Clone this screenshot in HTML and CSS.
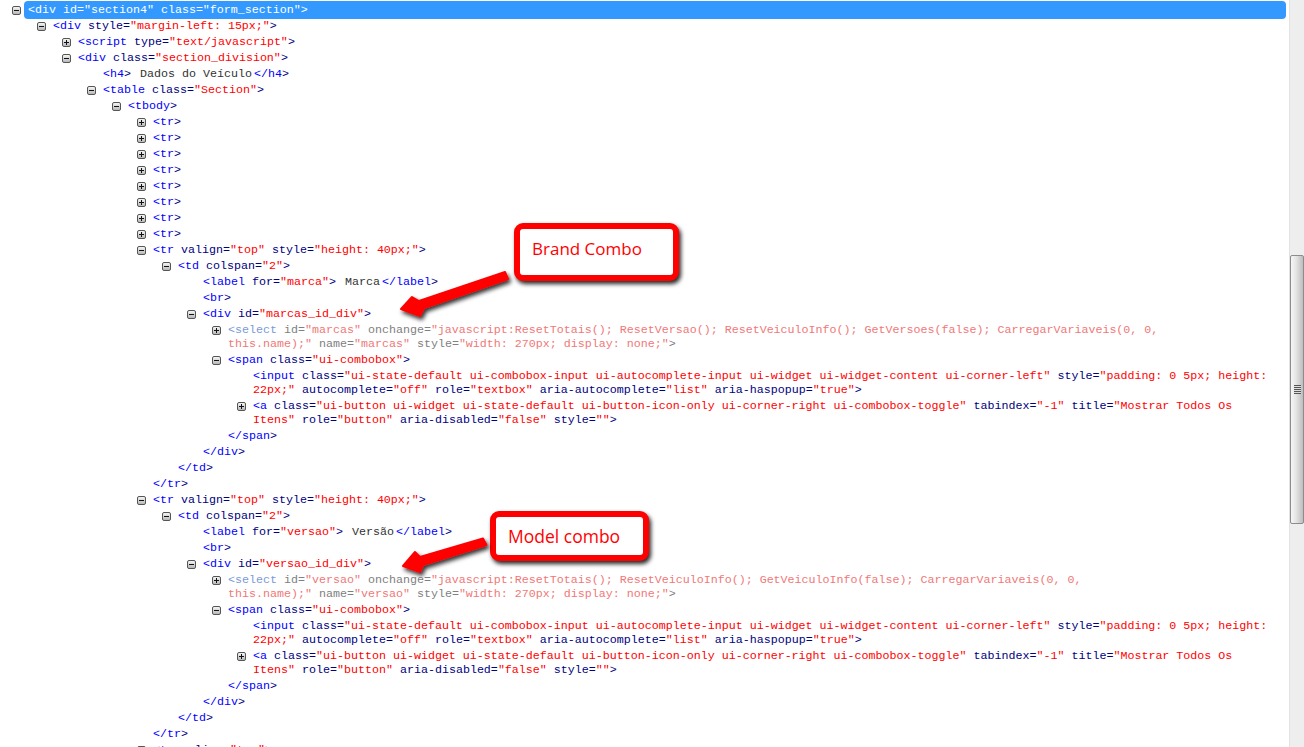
FILE: index.html
```html
<!DOCTYPE html>
<html lang="en">
<head>
<meta charset="utf-8">
<title>DOM tree</title>
<link rel="stylesheet" href="styles.css">
</head>
<body>
<div class="page">
<main class="tree">
<div class="row l0 sel"><i class="tog minus"></i><code>&lt;div id="section4" class="form_section"&gt;</code></div>
<div class="row l1"><i class="tog minus"></i><code><b>&lt;div</b> style=<u>"margin-left: 15px;"</u>&gt;</code></div>
<div class="row l2"><i class="tog plus"></i><code><b>&lt;script</b> type=<u>"text/javascript"</u>&gt;</code></div>
<div class="row l2"><i class="tog minus"></i><code><b>&lt;div</b> class=<u>"section_division"</u>&gt;</code></div>
<div class="row l3"><code><b>&lt;h4</b>&gt; <s>Dados do Veículo</s><b>&lt;/h4</b>&gt;</code></div>
<div class="row l3"><i class="tog minus"></i><code><b>&lt;table</b> class=<u>"Section"</u>&gt;</code></div>
<div class="row l4"><i class="tog minus"></i><code><b>&lt;tbody</b>&gt;</code></div>
<div class="row l5"><i class="tog plus"></i><code><b>&lt;tr</b>&gt;</code></div>
<div class="row l5"><i class="tog plus"></i><code><b>&lt;tr</b>&gt;</code></div>
<div class="row l5"><i class="tog plus"></i><code><b>&lt;tr</b>&gt;</code></div>
<div class="row l5"><i class="tog plus"></i><code><b>&lt;tr</b>&gt;</code></div>
<div class="row l5"><i class="tog plus"></i><code><b>&lt;tr</b>&gt;</code></div>
<div class="row l5"><i class="tog plus"></i><code><b>&lt;tr</b>&gt;</code></div>
<div class="row l5"><i class="tog plus"></i><code><b>&lt;tr</b>&gt;</code></div>
<div class="row l5"><i class="tog plus"></i><code><b>&lt;tr</b>&gt;</code></div>
<div class="row l5"><i class="tog minus"></i><code><b>&lt;tr</b> valign=<u>"top"</u> style=<u>"height: 40px;"</u>&gt;</code></div>
<div class="row l6"><i class="tog minus"></i><code><b>&lt;td</b> colspan=<u>"2"</u>&gt;</code></div>
<div class="row l7"><code><b>&lt;label</b> for=<u>"marca"</u>&gt; <s>Marca</s><b>&lt;/label</b>&gt;</code></div>
<div class="row l7"><code><b>&lt;br</b>&gt;</code></div>
<div class="row l7"><i class="tog minus"></i><code><b>&lt;div</b> id=<u>"marcas_id_div"</u>&gt;</code></div>
<div class="row l8"><i class="tog plus"></i><code class="faded"><b>&lt;select</b> id=<u>"marcas"</u> onchange=<u>"javascript:ResetTotais(); ResetVersao(); ResetVeiculoInfo(); GetVersoes(false); CarregarVariaveis(0, 0,<br>this.name);"</u> name=<u>"marcas"</u> style=<u>"width: 270px; display: none;"</u>&gt;</code></div>
<div class="row l8"><i class="tog minus"></i><code><b>&lt;span</b> class=<u>"ui-combobox"</u>&gt;</code></div>
<div class="row l9"><code><b>&lt;input</b> class=<u>"ui-state-default ui-combobox-input ui-autocomplete-input ui-widget ui-widget-content ui-corner-left"</u> style=<u>"padding: 0 5px; height:<br>22px;"</u> autocomplete=<u>"off"</u> role=<u>"textbox"</u> aria-autocomplete=<u>"list"</u> aria-haspopup=<u>"true"</u>&gt;</code></div>
<div class="row l9"><i class="tog plus"></i><code><b>&lt;a</b> class=<u>"ui-button ui-widget ui-state-default ui-button-icon-only ui-corner-right ui-combobox-toggle"</u> tabindex=<u>"-1"</u> title=<u>"Mostrar Todos Os<br>Itens"</u> role=<u>"button"</u> aria-disabled=<u>"false"</u> style=<u>""</u>&gt;</code></div>
<div class="row l8"><code><b>&lt;/span</b>&gt;</code></div>
<div class="row l7"><code><b>&lt;/div</b>&gt;</code></div>
<div class="row l6"><code><b>&lt;/td</b>&gt;</code></div>
<div class="row l5"><code><b>&lt;/tr</b>&gt;</code></div>
<div class="row l5"><i class="tog minus"></i><code><b>&lt;tr</b> valign=<u>"top"</u> style=<u>"height: 40px;"</u>&gt;</code></div>
<div class="row l6"><i class="tog minus"></i><code><b>&lt;td</b> colspan=<u>"2"</u>&gt;</code></div>
<div class="row l7"><code><b>&lt;label</b> for=<u>"versao"</u>&gt; <s>Versão</s><b>&lt;/label</b>&gt;</code></div>
<div class="row l7"><code><b>&lt;br</b>&gt;</code></div>
<div class="row l7"><i class="tog minus"></i><code><b>&lt;div</b> id=<u>"versao_id_div"</u>&gt;</code></div>
<div class="row l8"><i class="tog plus"></i><code class="faded"><b>&lt;select</b> id=<u>"versao"</u> onchange=<u>"javascript:ResetTotais(); ResetVeiculoInfo(); GetVeiculoInfo(false); CarregarVariaveis(0, 0,<br>this.name);"</u> name=<u>"versao"</u> style=<u>"width: 270px; display: none;"</u>&gt;</code></div>
<div class="row l8"><i class="tog minus"></i><code><b>&lt;span</b> class=<u>"ui-combobox"</u>&gt;</code></div>
<div class="row l9"><code><b>&lt;input</b> class=<u>"ui-state-default ui-combobox-input ui-autocomplete-input ui-widget ui-widget-content ui-corner-left"</u> style=<u>"padding: 0 5px; height:<br>22px;"</u> autocomplete=<u>"off"</u> role=<u>"textbox"</u> aria-autocomplete=<u>"list"</u> aria-haspopup=<u>"true"</u>&gt;</code></div>
<div class="row l9"><i class="tog plus"></i><code><b>&lt;a</b> class=<u>"ui-button ui-widget ui-state-default ui-button-icon-only ui-corner-right ui-combobox-toggle"</u> tabindex=<u>"-1"</u> title=<u>"Mostrar Todos Os<br>Itens"</u> role=<u>"button"</u> aria-disabled=<u>"false"</u> style=<u>""</u>&gt;</code></div>
<div class="row l8"><code><b>&lt;/span</b>&gt;</code></div>
<div class="row l7"><code><b>&lt;/div</b>&gt;</code></div>
<div class="row l6"><code><b>&lt;/td</b>&gt;</code></div>
<div class="row l5"><code><b>&lt;/tr</b>&gt;</code></div>
<div class="row l5"><i class="tog plus"></i><code><b>&lt;tr</b> valign=<u>"top"</u>&gt;</code></div>
</main>
<aside class="scrollbar"><div class="thumb"><div class="grip"></div></div></aside>
</div>

<div class="callout brand">Brand Combo</div>
<div class="callout model">Model combo</div>
<svg class="arrow arrow-brand" width="130" height="60" viewBox="0 0 130 60" aria-hidden="true">
  <defs><filter id="sh1" x="-20%" y="-30%" width="140%" height="170%"><feDropShadow dx="2" dy="3" stdDeviation="2" flood-color="#000" flood-opacity=".8"/></filter></defs>
  <path filter="url(#sh1)" fill="#f00" stroke="#f00" stroke-linejoin="round" stroke-width="2" d="M105 2 L108 9 L24 38 L20 46 L1 39 L12 27 L19 31 Z"/>
</svg>
<svg class="arrow arrow-model" width="110" height="50" viewBox="0 0 110 50" aria-hidden="true">
  <defs><filter id="sh2" x="-20%" y="-30%" width="140%" height="170%"><feDropShadow dx="2" dy="3" stdDeviation="2" flood-color="#000" flood-opacity=".8"/></filter></defs>
  <path filter="url(#sh2)" fill="#f00" stroke="#f00" stroke-linejoin="round" stroke-width="2" d="M82 3.500 L85.500 10 L22 30 L19 37 L2 31 L14 17 L19 22 Z"/>
</svg>
</body>
</html>
```

FILE: styles.css
```css
html, body {
  margin: 0;
  padding: 0;
  height: 747px;
  overflow: hidden;
  background: #fff;
}

.page {
  display: flex;
  height: 747px;
  overflow: hidden;
}

.tree {
  flex: 1;
  padding-top: 3px;
  overflow: hidden;
  font-family: "Liberation Mono", "Courier New", monospace;
  font-size: 11.67px;
  line-height: 14px;
}

.row {
  display: flex;
  align-items: flex-start;
  padding-bottom: 2px;
  white-space: nowrap;
}

.l0 { padding-left: 28px; }
.l1 { padding-left: 53px; }
.l2 { padding-left: 78px; }
.l3 { padding-left: 103px; }
.l4 { padding-left: 128px; }
.l5 { padding-left: 153px; }
.l6 { padding-left: 178px; }
.l7 { padding-left: 203px; }
.l8 { padding-left: 228px; }
.l9 { padding-left: 253px; }

code {
  font: inherit;
  color: #000080;
}

code b {
  font-weight: normal;
  color: #0000ff;
}

code u {
  text-decoration: none;
  color: #ff0000;
}

code s {
  margin: 0 2px;
  text-decoration: none;
  color: #333;
}

code.faded {
  color: #808080;
}

.faded b {
  color: #7a9ad8;
}

.faded u {
  color: #f07878;
}

.tog {
  position: relative;
  flex: none;
  box-sizing: border-box;
  width: 9px;
  height: 9px;
  margin: 3px 7px 0 -16px;
  border: 1px solid #555;
  border-radius: 2px;
  background: linear-gradient(#f4f4f4, #b8b8b8);
}

.tog::before {
  content: "";
  position: absolute;
  left: 1px;
  right: 1px;
  top: 3px;
  height: 1px;
  background: #111;
}

.plus::after {
  content: "";
  position: absolute;
  top: 1px;
  bottom: 1px;
  left: 3px;
  width: 1px;
  background: #111;
}

.sel {
  position: relative;
}

.sel::before {
  content: "";
  position: absolute;
  left: 24px;
  width: 1262px;
  top: -2px;
  height: 18px;
  border-radius: 4px;
  background: #3399ff;
}

.sel .tog {
  z-index: 1;
}

.sel code {
  position: relative;
  color: #fff;
}

.scrollbar {
  flex: none;
  width: 15px;
  margin-left: 3px;
  background: #eeeeee;
  border-left: 1px solid #e2e2e2;
  box-sizing: border-box;
  padding-top: 255px;
}

.thumb {
  display: flex;
  align-items: center;
  justify-content: center;
  box-sizing: border-box;
  width: 14px;
  height: 269px;
  border: 1px solid #8c8c8c;
  border-radius: 2px;
  background: linear-gradient(90deg, #f6f6f6, #e6e6e6 40%, #bdbdbd);
}

.grip {
  width: 7px;
  height: 9px;
  background: repeating-linear-gradient(#555 0 1px, #ddd 1px 2px);
}

.callout {
  position: absolute;
  box-sizing: border-box;
  display: flex;
  align-items: center;
  background: #fff;
  border: 6px solid #f00;
  border-radius: 9px;
  box-shadow: 2px 3px 4px rgba(0, 0, 0, .85);
  color: #f00;
  font-family: "Open Sans", "Noto Sans", sans-serif;
}

.brand {
  left: 514px;
  top: 223px;
  width: 165px;
  height: 58px;
  padding: 0 0 7px 12px;
  font-size: 17px;
}

.model {
  left: 490px;
  top: 511px;
  width: 159px;
  height: 50px;
  padding: 0 0 0 12px;
  font-size: 17.5px;
}

.arrow {
  position: absolute;
  overflow: visible;
}

.arrow-brand {
  left: 400px;
  top: 270px;
}

.arrow-model {
  left: 401px;
  top: 535px;
}
```
